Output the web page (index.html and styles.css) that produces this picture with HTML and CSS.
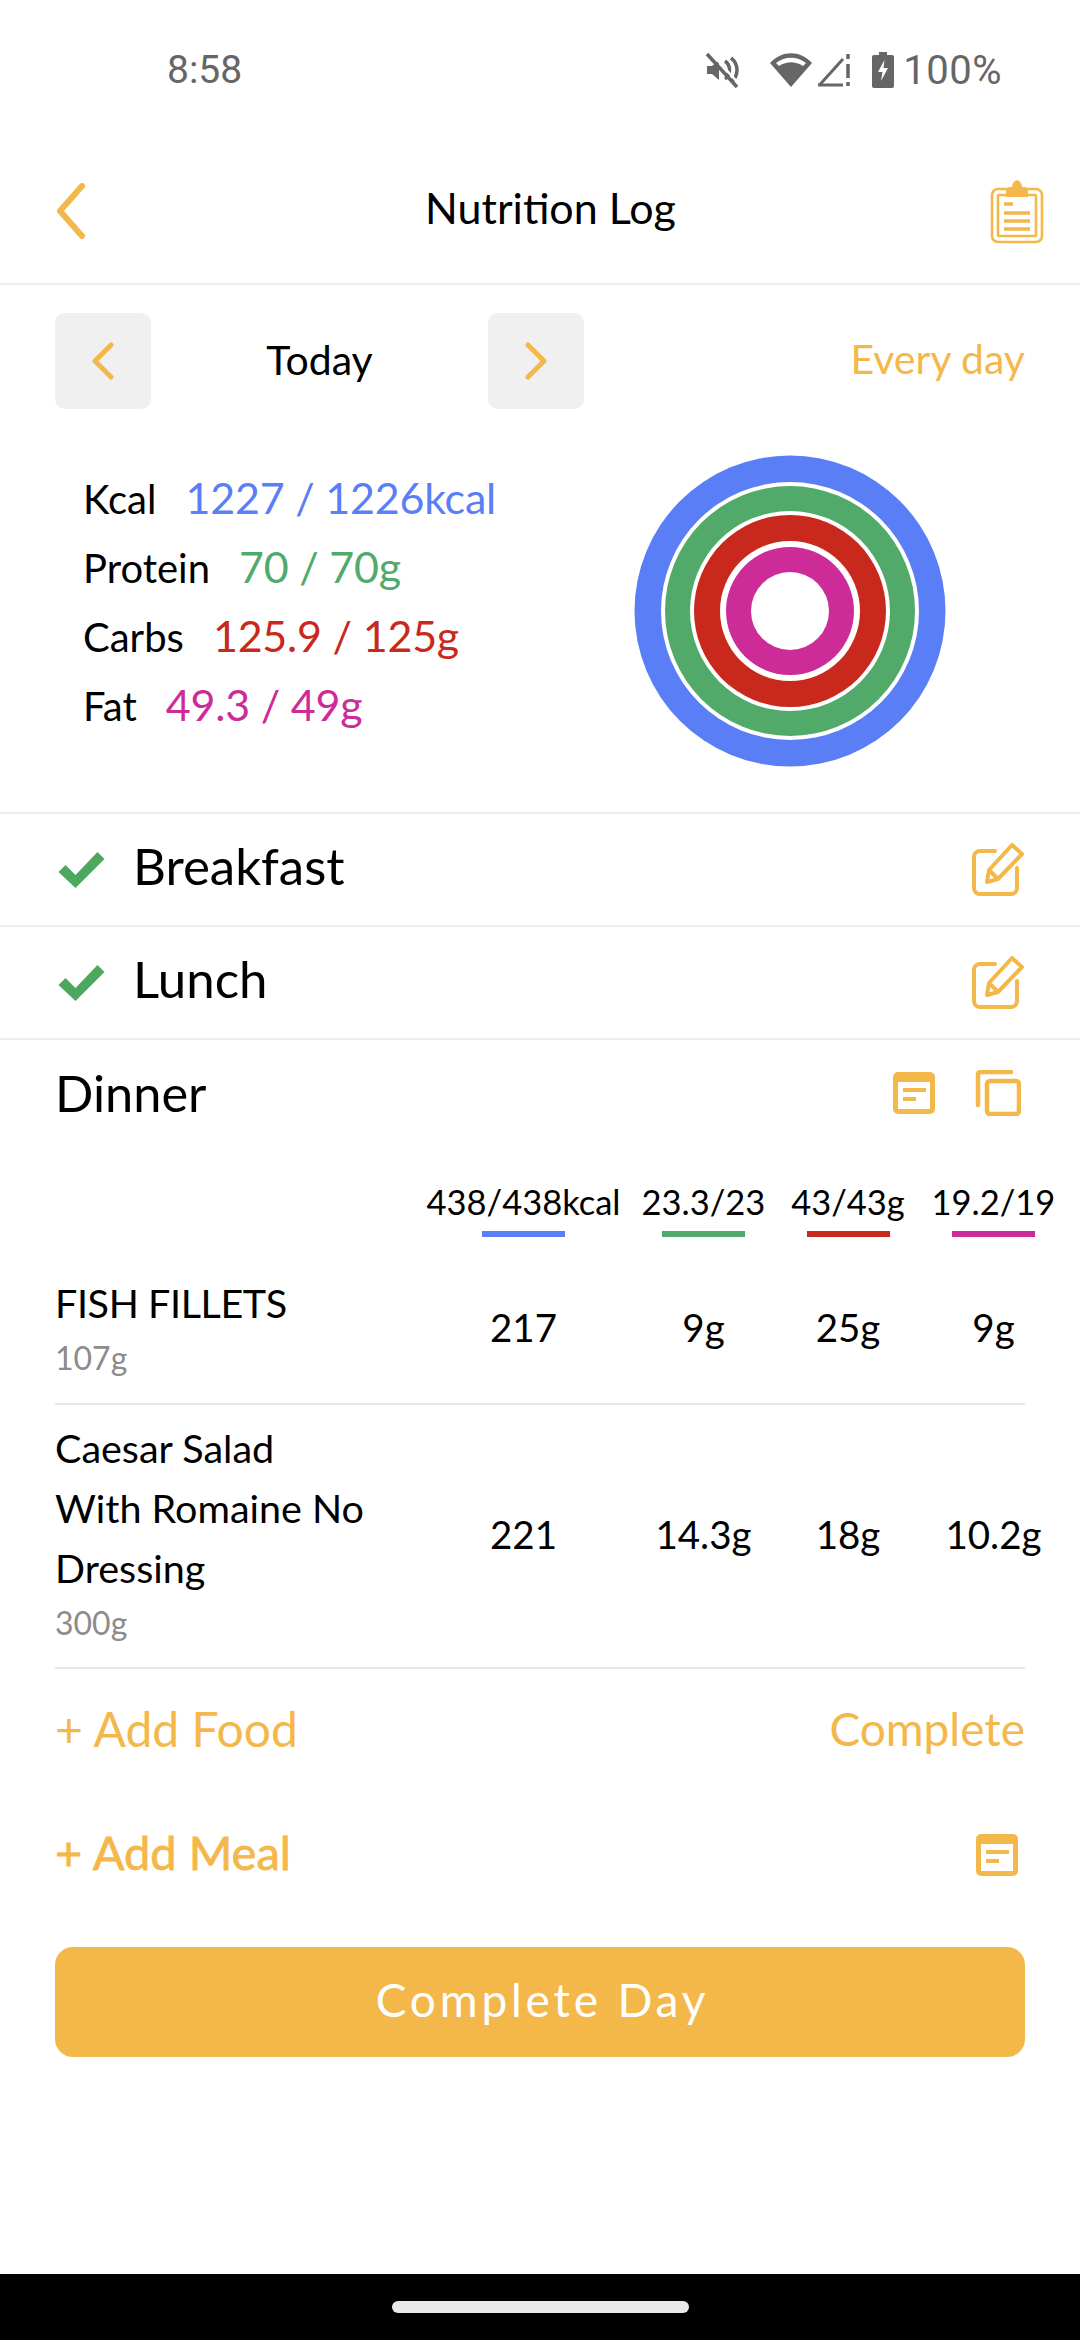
FILE: index.html
```html
<!DOCTYPE html>
<html lang="en">
<head>
    <meta charset="UTF-8">
    <meta name="viewport" content="width=device-width, initial-scale=1.0">
    <title>Nutrition Log</title>
    <link rel="stylesheet" href="styles.css">
</head>
<body>
    <div class="status_bar">
        <span class="status_time">8:58</span>
        <div class="status_icons">
            <svg class="ic_mute" width="38" height="38" viewBox="0 0 36 38" fill="none" stroke="#666"><path d="M3 15h5l7-6v20l-7-6H3z" fill="#666" stroke="none"/><path d="M21 10c6 4 6 14 0 18M27 7c8 6 8 18 0 24" stroke-width="3.5"/><path d="M3 3l30 33" stroke-width="3.5"/><path d="M7 2l30 33" stroke="#fff" stroke-width="2.5"/></svg>
            <svg class="ic_wifi" width="42" height="34" viewBox="0 0 42 34"><path d="M21 34L0 10C12-3 30-3 42 10z" fill="#666"/><path d="M6 10C15 3 27 3 36 10L33 13C25 8 17 8 9 13z" fill="#fff"/></svg>
            <svg class="ic_signal" width="34" height="34" viewBox="0 0 34 34" fill="none"><path d="M2.500 32L26 6" stroke="#666" stroke-width="3"/><path d="M1 32h25" stroke="#666" stroke-width="3"/><path d="M31 1v5M31 11v14M31 29v4" stroke="#666" stroke-width="3.500"/></svg>
            <svg class="ic_battery" width="22" height="36" viewBox="0 0 22 36"><path d="M7 0h8v3h5a2 2 0 0 1 2 2v29a2 2 0 0 1-2 2H2a2 2 0 0 1-2-2V5a2 2 0 0 1 2-2h5z" fill="#666"/><path d="M12.500 8L6 20h4.500L9 29l7-13h-4.500z" fill="#fff"/></svg>
            <span class="status_pct">100%</span>
        </div>
    </div>

    <header class="top_bar">
        <svg width="32" height="56" viewBox="0 0 32 56" fill="none"><path d="M27 3L5 28L27 53" stroke="#f4b84a" stroke-width="6" stroke-linecap="round" stroke-linejoin="round"/></svg>
        <h1 class="top_title">Nutrition Log</h1>
        <svg class="ic_clip" width="54" height="66" viewBox="0 0 54 66" fill="none" stroke="#f4b84a" stroke-width="2.600"><rect x="2" y="11" width="50" height="53" rx="6"/><rect x="8" y="17" width="38" height="41" rx="1"/><path d="M16 19v-6a4 4 0 0 1 4-4h2c1-9 9-9 10 0h2a4 4 0 0 1 4 4v6z" fill="#f4b84a" stroke="none"/><path d="M14 26h9M14 35h26M14 43h26M14 51h26" stroke-width="3.500"/></svg>
    </header>

    <section class="date_bar">
        <div class="date_nav">
            <button class="date_btn"><svg width="24" height="38" viewBox="0 0 24 38" fill="none"><path d="M20 3L4 19l16 16" stroke="#f4b84a" stroke-width="5" stroke-linecap="round" stroke-linejoin="round"/></svg></button>
            <span class="date_label">Today</span>
            <button class="date_btn"><svg width="24" height="38" viewBox="0 0 24 38" fill="none"><path d="M4 3l16 16L4 35" stroke="#f4b84a" stroke-width="5" stroke-linecap="round" stroke-linejoin="round"/></svg></button>
        </div>
        <span class="link link_md">Every day</span>
    </section>

    <section class="summary">
        <div class="macros">
            <div class="macro"><span class="macro_name">Kcal</span><span class="macro_val c_blue">1227 / 1226kcal</span></div>
            <div class="macro"><span class="macro_name">Protein</span><span class="macro_val c_green">70 / 70g</span></div>
            <div class="macro"><span class="macro_name">Carbs</span><span class="macro_val c_red">125.9 / 125g</span></div>
            <div class="macro"><span class="macro_name">Fat</span><span class="macro_val c_pink">49.3 / 49g</span></div>
        </div>
        <svg class="rings" width="312" height="312" viewBox="0 0 312 312">
            <circle cx="156" cy="156" r="155.500" fill="#5a7ef5"/>
            <circle cx="156" cy="156" r="129" fill="#fff"/>
            <circle cx="156" cy="156" r="125" fill="#51aa6a"/>
            <circle cx="156" cy="156" r="100" fill="#fff"/>
            <circle cx="156" cy="156" r="96" fill="#c9281c"/>
            <circle cx="156" cy="156" r="70" fill="#fff"/>
            <circle cx="156" cy="156" r="64" fill="#cd2c98"/>
            <circle cx="156" cy="156" r="39" fill="#fff"/>
        </svg>
    </section>

    <div class="meal_row">
        <svg class="ic_check" width="47" height="36" viewBox="0 0 46 36"><path d="M0 20l7-7 10 10L39 0l7 7-29 29z" fill="#4ca85f"/></svg>
        <span class="meal_name">Breakfast</span>
        <svg class="ic_edit" width="54" height="54" viewBox="0 0 54 54" fill="none" stroke="#f4b84a" stroke-width="4" stroke-linecap="round" stroke-linejoin="round"><path d="M24 8H9a6 6 0 0 0-6 6v31a6 6 0 0 0 6 6h31a6 6 0 0 0 6-6V25"/><path d="M41 2l10 9-24 25-11 3 2-12z"/><path d="M20 29l5 5"/></svg>
    </div>
    <div class="meal_row">
        <svg class="ic_check" width="47" height="36" viewBox="0 0 46 36"><path d="M0 20l7-7 10 10L39 0l7 7-29 29z" fill="#4ca85f"/></svg>
        <span class="meal_name">Lunch</span>
        <svg class="ic_edit" width="54" height="54" viewBox="0 0 54 54" fill="none" stroke="#f4b84a" stroke-width="4" stroke-linecap="round" stroke-linejoin="round"><path d="M24 8H9a6 6 0 0 0-6 6v31a6 6 0 0 0 6 6h31a6 6 0 0 0 6-6V25"/><path d="M41 2l10 9-24 25-11 3 2-12z"/><path d="M20 29l5 5"/></svg>
    </div>

    <section class="dinner">
        <div class="dinner_head">
            <span class="dinner_name">Dinner</span>
            <svg class="ic_note" width="42" height="42" viewBox="0 0 42 42"><path d="M5 0h32a5 5 0 0 1 5 5v32a5 5 0 0 1-5 5H5a5 5 0 0 1-5-5V5a5 5 0 0 1 5-5zm0 10v27h32V10z" fill="#f4b84a"/><path d="M10 16h23v4H10zM10 25h13v4H10z" fill="#f4b84a"/></svg>
            <svg class="ic_copy" width="46" height="46" viewBox="0 0 46 46" fill="none" stroke="#f4b84a" stroke-width="4.500" stroke-linecap="round" stroke-linejoin="round"><path d="M3 35V4a2 2 0 0 1 2-2h31"/><rect x="12" y="11" width="32" height="33" rx="3"/></svg>
        </div>

        <div class="food_grid grid_head">
            <div></div>
            <div class="col_head"><span>438/438kcal</span><i class="col_bar bg_blue"></i></div>
            <div class="col_head"><span>23.3/23</span><i class="col_bar bg_green"></i></div>
            <div class="col_head"><span>43/43g</span><i class="col_bar bg_red"></i></div>
            <div class="col_head"><span>19.2/19</span><i class="col_bar bg_pink"></i></div>
        </div>

        <div class="food_grid food_row row_one">
            <div class="food_info">
                <div class="food_name food_caps">FISH FILLETS</div>
                <div class="food_qty">107g</div>
            </div>
            <span class="food_num">217</span>
            <span class="food_num">9g</span>
            <span class="food_num">25g</span>
            <span class="food_num">9g</span>
        </div>

        <div class="food_grid food_row row_two">
            <div class="food_info">
                <div class="food_name">Caesar Salad<br>With Romaine No<br>Dressing</div>
                <div class="food_qty">300g</div>
            </div>
            <span class="food_num">221</span>
            <span class="food_num">14.3g</span>
            <span class="food_num">18g</span>
            <span class="food_num">10.2g</span>
        </div>

        <div class="add_row">
            <span class="link link_lg">+ Add Food</span>
            <span class="link link_sm">Complete</span>
        </div>
    </section>

    <div class="meal_add">
        <span class="link link_lg link_bold">+ Add Meal</span>
        <svg class="ic_note" width="42" height="42" viewBox="0 0 42 42"><path d="M5 0h32a5 5 0 0 1 5 5v32a5 5 0 0 1-5 5H5a5 5 0 0 1-5-5V5a5 5 0 0 1 5-5zm0 10v27h32V10z" fill="#f4b84a"/><path d="M10 16h23v4H10zM10 25h13v4H10z" fill="#f4b84a"/></svg>
    </div>

    <button class="complete_btn">Complete Day</button>

    <div class="spacer"></div>

    <footer class="nav_bar"><span class="nav_pill"></span></footer>
</body>
</html>
```

FILE: styles.css
```css
* {
    box-sizing: border-box;
}

body {
    margin: 0;
    width: 1080px;
    height: 2340px;
    display: flex;
    flex-direction: column;
    overflow: hidden;
    background: #ffffff;
    color: #000000;
    font-family: "Lato", "Noto Sans", sans-serif;
}

.status_bar {
    height: 140px;
    display: flex;
    align-items: center;
    justify-content: space-between;
    padding: 0 78px 0 167px;
    color: #666666;
    font-family: "Roboto", sans-serif;
    font-size: 39px;
}

.status_icons {
    display: flex;
    align-items: center;
}

.status_pct {
    font-size: 40px;
    letter-spacing: 0.5px;
}

.ic_mute { margin-right: 29px; }
.ic_wifi { margin-right: 5px; }
.ic_battery { margin: 0 9px 0 21px; }

.top_bar {
    height: 145px;
    display: flex;
    align-items: center;
    justify-content: space-between;
    padding: 0 36px 2px 55px;
    border-bottom: 2px solid #eeeeee;
}

.top_title {
    margin: 0 0 6px 24px;
    font-size: 43px;
    font-weight: 400;
}

.date_bar {
    height: 124px;
    display: flex;
    align-items: flex-end;
    justify-content: space-between;
    padding: 0 55px 0 55px;
}

.date_nav {
    width: 529px;
    display: flex;
    align-items: center;
    justify-content: space-between;
}

.date_btn {
    width: 96px;
    height: 96px;
    padding: 0;
    display: flex;
    align-items: center;
    justify-content: center;
    border: none;
    border-radius: 10px;
    background: #f0f0f0;
}

.date_label {
    padding-bottom: 4px;
    font-size: 41px;
}

.link {
    color: #f4b84a;
}

.link_md {
    height: 96px;
    line-height: 92px;
    font-size: 41px;
}

.link_lg {
    font-size: 48px;
}

.link_sm {
    font-size: 46px;
}

.link_bold {
    font-size: 47px;
    -webkit-text-stroke: 0.8px #f4b84a;
}

.summary {
    height: 405px;
    display: flex;
    align-items: flex-start;
    justify-content: space-between;
    padding: 0 134px 0 83px;
    border-bottom: 2px solid #eeeeee;
}

.macros {
    margin-top: 54px;
    display: flex;
    flex-direction: column;
}

.macro {
    height: 69px;
    display: flex;
    align-items: baseline;
    gap: 29px;
    line-height: 69px;
}

.macro_name {
    font-size: 40px;
}

.macro_val {
    font-size: 43px;
    letter-spacing: -0.2px;
}

.c_blue { color: #5a7ef5; }
.c_green { color: #51aa6a; }
.c_red { color: #c9281c; }
.c_pink { color: #cd2c98; }

.bg_blue { background: #5a7ef5; }
.bg_green { background: #51aa6a; }
.bg_red { background: #c9281c; }
.bg_pink { background: #cd2c98; }

.rings {
    margin-top: 46px;
    flex: none;
}

.meal_row {
    height: 113px;
    display: flex;
    align-items: center;
    padding: 0 55px 0 58px;
    border-bottom: 2px solid #eeeeee;
}

.ic_check {
    margin-right: 28px;
}

.meal_name {
    flex: 1;
    padding-bottom: 8px;
    font-size: 51px;
}

.dinner {
    padding: 0 55px;
}

.dinner_head {
    height: 106px;
    display: flex;
    align-items: center;
}

.dinner_name {
    flex: 1;
    padding-bottom: 2px;
    font-size: 50.500px;
}

.dinner_head .ic_note {
    margin-right: 40px;
}

.dinner_head .ic_copy {
    margin-right: 4px;
}

.food_grid {
    width: 970px;
    display: grid;
    grid-template-columns: 379px 179px 181px 108px 123px;
    align-items: center;
    justify-items: center;
}

.grid_head {
    height: 102px;
    align-items: start;
    padding-top: 34px;
}

.col_head {
    display: flex;
    flex-direction: column;
    align-items: center;
    gap: 7px;
    white-space: nowrap;
    font-size: 34.500px;
    line-height: 44px;
}

.grid_head .col_head:last-child,
.food_num:last-child {
    width: 183px;
    justify-self: start;
}

.col_bar {
    display: block;
    width: 83px;
    height: 6px;
}

.food_row {
    border-bottom: 2px solid #e8e8e8;
}

.row_one {
    height: 157px;
}

.row_two {
    height: 264px;
}

.food_info {
    justify-self: start;
}

.row_one .food_info {
    padding-top: 3px;
}

.row_two .food_info {
    padding-bottom: 7px;
}

.food_name {
    font-size: 39.500px;
    line-height: 60px;
}

.food_caps {
    letter-spacing: -0.4px;
}

.food_qty {
    color: #8c8c8c;
    font-size: 32px;
    line-height: 49px;
}

.food_num {
    white-space: nowrap;
    font-size: 38.500px;
    text-align: center;
}

.row_one .food_num {
    padding-top: 3px;
}

.row_two .food_num {
    padding-bottom: 4px;
}

.add_row {
    height: 124px;
    display: flex;
    align-items: center;
    justify-content: space-between;
    padding-bottom: 6px;
}

.meal_add {
    height: 124px;
    display: flex;
    align-items: center;
    justify-content: space-between;
    padding: 0 62px 0 55px;
}

.meal_add .link {
    padding-bottom: 6px;
}

.complete_btn {
    width: 970px;
    height: 110px;
    margin: 30px 55px 0;
    padding: 0 0 5px 5px;
    border: none;
    border-radius: 18px;
    background: #f4b84a;
    color: #ffffff;
    font-family: inherit;
    font-size: 46px;
    letter-spacing: 3.800px;
}

.spacer {
    flex: 1;
}

.nav_bar {
    height: 66px;
    display: flex;
    justify-content: center;
    padding-top: 27px;
    background: #000000;
}

.nav_pill {
    width: 297px;
    height: 12px;
    border-radius: 6px;
    background: #e8e8e8;
}
```
